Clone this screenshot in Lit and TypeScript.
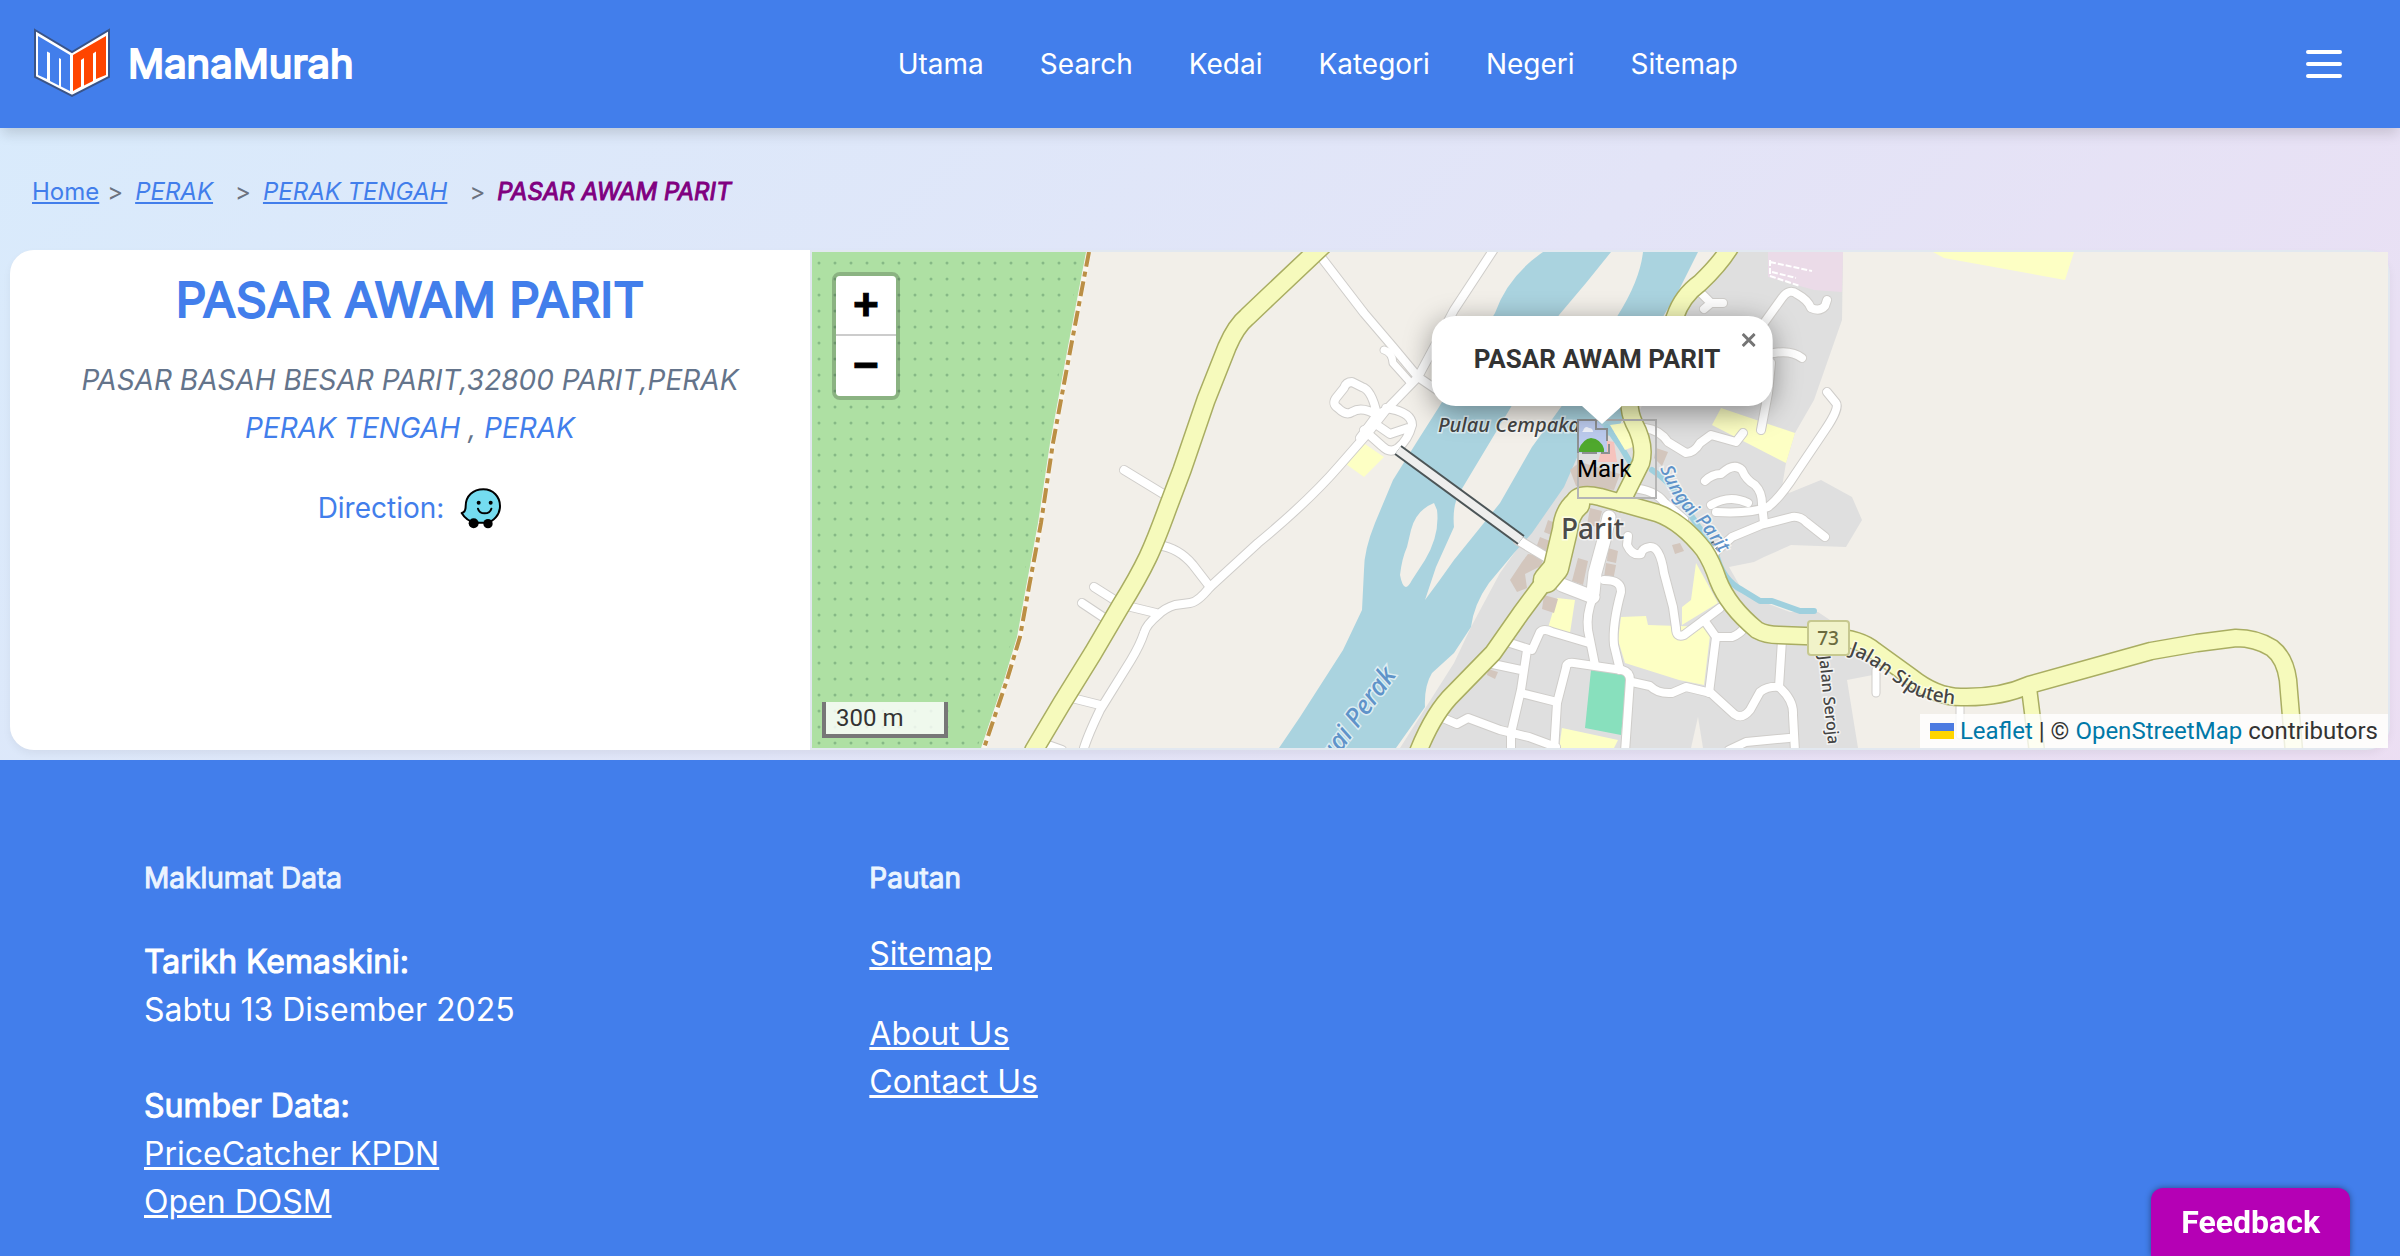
import { LitElement, html, css, svg } from "lit";
import { customElement, state } from "lit/decorators.js";

type Road = { d: string; w: number };

/* Minor streets, drawn first as a grey casing and then as a white core. */
const STREETS: Road[] = [
  { d: "M1124 470L1165 495", w: 8 },
  { d: "M1158 545Q1179 548 1193 565L1210 587", w: 8 },
  { d: "M1094 587L1113 599M1082 603L1103 617M1127 606L1156 613", w: 8 },
  { d: "M1072 698L1100 705M1048 745L1062 750", w: 8 },
  { d: "M1418 377L1386 410L1368 433L1340 465Q1310 500 1258 543L1210 587Q1198 602 1190 603L1175 605Q1165 608 1158 615Q1146 625 1144 633Q1140 645 1131 660L1100 710Q1088 735 1084 748", w: 8 },
  { d: "M1321 257L1364 313L1393 347L1418 377L1440 392M1418 377L1454 310L1496 246", w: 8 },
  { d: "M1384 350Q1392 352 1393 363L1410 382", w: 7 },
  { d: "M1386 410L1377 415Q1372 390 1362 387L1352 382Q1346 382 1344 388L1336 398Q1332 404 1338 408Q1346 416 1352 412Q1362 406 1377 415L1360 438M1386 408Q1412 412 1412 425Q1408 440 1398 448Q1390 454 1382 446L1364 430M1377 425L1390 434L1408 428", w: 8 },
  { d: "M1518 540L1546 557", w: 9 },
  { d: "M1701 293L1711 303L1723 303M1711 303L1704 309", w: 8 },
  { d: "M1764 323L1782 298Q1789 288 1797 294Q1808 300 1811 308Q1820 312 1825 306L1827 300", w: 8 },
  { d: "M1774 353Q1792 350 1802 358M1771 363L1768 393L1761 430", w: 8 },
  { d: "M1645 428Q1660 430 1668 442L1686 453Q1694 453 1700 443L1711 435L1736 442L1743 433", w: 8 },
  { d: "M1827 392L1836 403Q1840 408 1825 430L1796 473Q1780 498 1768 507Q1750 514 1716 512", w: 8 },
  { d: "M1705 481Q1712 474 1721 474Q1734 462 1742 470Q1746 480 1755 485Q1762 492 1762 504L1764 523M1711 505Q1730 494 1748 503", w: 8 },
  { d: "M1711 556L1732 537L1761 525L1792 517Q1800 516 1806 522L1825 537", w: 8 },
  { d: "M1632 488Q1655 490 1664 502L1684 519", w: 8 },
  { d: "M1609 517L1604 540L1595 573L1593 593", w: 13 },
  { d: "M1562 585L1593 597", w: 13 },
  { d: "M1593 597Q1586 615 1588 630L1595 665", w: 8 },
  { d: "M1604 580Q1622 580 1621 592Q1612 625 1614 645L1620 670", w: 8 },
  { d: "M1507 642L1532 650L1540 632Q1544 628 1552 632L1589 643", w: 8 },
  { d: "M1488 663L1521 670M1527 650L1521 690L1511 733V752M1521 693L1557 702", w: 8 },
  { d: "M1554 752L1557 703L1566 668Q1566 662 1574 663L1622 670Q1630 672 1630 680L1625 752", w: 8 },
  { d: "M1443 718L1457 724L1468 718L1500 730L1529 737L1556 747", w: 8 },
  { d: "M1632 682L1650 686Q1658 694 1672 693L1686 687L1711 693L1734 714Q1742 720 1750 710L1760 692Q1768 686 1779 687L1782 640", w: 8 },
  { d: "M1779 687Q1794 700 1793 715L1795 752", w: 8 },
  { d: "M1709 693L1716 637L1704 620M1716 637H1732Q1740 634 1744 628", w: 8 },
  { d: "M1720 608L1684 635Q1676 638 1676 628L1673 607L1664 573Q1660 546 1650 547Q1642 548 1641 554Q1632 556 1627 545L1628 536", w: 8 },
  { d: "M1729 750L1746 742L1789 738", w: 8 },
  { d: "M1876 670V693M1960 707V735", w: 7 },
];

/* Secondary roads, olive casing with a pale yellow core. */
const ROADS: Road[] = [
  { d: "M1322 246L1268 297L1247 317Q1236 326 1227 347L1206 400L1182 470L1168 507Q1156 540 1148 557Q1138 578 1120 607L1093 653L1062 703L1034 750", w: 17 },
  { d: "M1732 244Q1722 262 1700 283Q1682 296 1675 317L1650 380M1630 395Q1628 410 1634 423Q1646 445 1641 463L1621 503", w: 16 },
  { d: "M1577 504Q1567 512 1565 530L1556 568L1546 580", w: 24 },
  { d: "M1574 502Q1578 492 1600 497L1657 513Q1682 522 1704 550Q1712 562 1718 580Q1728 606 1757 630Q1766 635 1779 635L1830 637Q1860 638 1875 651L1911 677Q1936 697 1961 697Q2000 698 2029 685L2090 668L2151 651L2197 643L2236 638Q2256 638 2272 648Q2285 658 2288 680L2294 752", w: 16 },
  { d: "M1550 574L1521 613L1493 653L1454 693Q1434 712 1418 752", w: 16 },
  { d: "M2029 688L2037 752", w: 14 },
];

const BUILDINGS =
  "M1522 562l6-8 16 2-3 10-16 8 2 14-10 4-7-12z M1544 595l14 4-4 14-12-4z M1540 537l10 4-5 12-9-5z M1548 520l12 5-4 12-12-5z M1578 558l10 3-5 24-11-4z M1606 563l10 2-3 16-9-3z M1608 548l10 3-2 12-9-2z M1590 508l12 3-4 16-11-2z M1672 545l8-2 4 8-9 3z M1656 448l12 4-6 14-8-8z M1570 470l10-8 40 12-6 16-38-4z M1488 669l10 3-3 7-8-4z";

@customElement("store-map")
export class StoreMap extends LitElement {
  static styles = css`
    :host {
      display: block;
      position: relative;
      overflow: hidden;
      height: 496px;
      background: #f2efe9;
      font-family: Roboto, "Liberation Sans", sans-serif;
      font-size: 24px;
      color: #333;
    }
    .tiles {
      display: block;
      width: 100%;
      height: 100%;
    }
    .label {
      font-family: "Noto Sans", sans-serif;
      font-size: 19px;
      font-weight: 500;
      fill: #444;
      stroke: #ffffff99;
      stroke-width: 3px;
      paint-order: stroke;
    }
    .place { font-size: 28px; fill: #4a4a4a; }
    .island { font-style: italic; font-size: 20px; }
    .water { font-style: italic; fill: #5f93c9; }
    .small { font-size: 16px; }
    .large { font-size: 26px; }
    .shield { fill: #6b6b3f; stroke: none; }
    .zoom {
      position: absolute;
      top: 20px;
      left: 20px;
      display: flex;
      flex-direction: column;
      border: 4px solid #0003;
      border-radius: 8px;
      background-clip: padding-box;
    }
    .zoom button {
      width: 60px;
      height: 60px;
      padding: 4px 0 0;
      border: 0;
      background: #fff;
      color: #000;
      font: bold 44px/56px "Liberation Mono", monospace;
      -webkit-text-stroke: 1px #000;
    }
    .zoom button:first-child {
      border-bottom: 2px solid #ccc;
      border-radius: 4px 4px 0 0;
    }
    .zoom button:last-child { border-radius: 0 0 4px 4px; }
    .scale {
      position: absolute;
      left: 10px;
      bottom: 10px;
      box-sizing: border-box;
      width: 126px;
      padding: 0 10px;
      border: 4px solid #777;
      border-top: 0;
      background: #fffc;
      line-height: 32px;
    }
    .credit {
      position: absolute;
      right: 0;
      bottom: 0;
      display: flex;
      align-items: center;
      gap: 6px;
      padding: 0 10px;
      background: #fffc;
      line-height: 34px;
      white-space: nowrap;
    }
    .credit a { color: #0078a8; text-decoration: none; }
    .flag { width: 24px; height: 16px; }
    .marker {
      position: absolute;
      top: 167px;
      left: calc(50% - 23px);
      width: 80px;
      height: 80px;
      box-shadow: inset 0 0 0 2px #b5b5b5;
      color: #000;
      line-height: 28px;
    }
    .marker svg { display: block; width: 34px; height: 36px; }
    .marker span { display: block; }
    .popup {
      position: absolute;
      top: 64px;
      left: calc(50% + 2px);
      transform: translateX(-50%);
      box-sizing: border-box;
      height: 90px;
      padding: 26px 52px 0 42px;
      border-radius: 24px;
      background: #fff;
      box-shadow: 0 6px 28px #0006;
      font-size: 26px;
      font-weight: 700;
      line-height: 34px;
      white-space: nowrap;
    }
    .tip {
      position: absolute;
      top: 100%;
      left: 50%;
      width: 40px;
      height: 20px;
      margin-left: -20px;
      background: #fff;
      clip-path: polygon(0 0, 100% 0, 50% 90%);
    }
    .close {
      position: absolute;
      top: 0;
      right: 0;
      width: 48px;
      height: 48px;
      padding: 0;
      border: 0;
      background: none;
    }
    .close svg { display: block; width: 14px; height: 14px; margin: 0 auto; }
  `;

  @state() private open = true;

  private tiles() {
    return svg`<svg class="tiles" viewBox="812 252 1576 496" preserveAspectRatio="xMidYMid slice" role="img" aria-label="Map of Parit">
      <defs>
        <pattern id="dots" x="811" y="255" width="16" height="16" patternUnits="userSpaceOnUse">
          <circle cx="8" cy="8" r="1.5" fill="#86b986"/>
        </pattern>
        <path id="siputeh" d="M1849 654Q1862 658 1880 671L1911 693Q1936 706 1985 705"/>
        <path id="parit" d="M1660 468Q1672 500 1690 516T1735 578"/>
      </defs>
      <rect x="812" y="252" width="1576" height="496" fill="#f2efe9"/>
      <path d="M812 252H1086L1066 357L1050 443L1038 523L1026 587L1017 637L1004 680L981 748H812Z" fill="#aee0a3"/>
      <path d="M812 252H1082L1062 357L1046 443L1034 523L1022 587L1013 637L1000 680L977 748H812Z" fill="url(#dots)"/>
      <path d="M1089 252L1069 357L1053 443L1041 523L1029 587L1020 637L1007 680L984 748" fill="none" stroke="#fbf6ee" stroke-width="5"/>
      <path d="M1089 252L1069 357L1053 443L1041 523L1029 587L1020 637L1007 680L984 748" fill="none" stroke="#bb8f45" stroke-width="4" stroke-dasharray="15 5 5 5"/>

      <path d="M1734 252H1843L1842 320L1814 400L1795 433L1786 463L1782 487L1789 493L1821 480L1852 497L1862 520L1846 547L1791 545L1764 557L1754 562L1729 567L1745 595L1790 612H1818L1860 640L1883 660L1878 674L1847 680L1858 748H1400L1454 663L1471 627L1500 573L1545 510L1579 453L1640 410L1690 300Z" fill="#dfdfdf"/>
      <path d="M1698 717L1703 748H1691Z" fill="#f2efe9"/>
      <path d="M1768 252H1843L1842 292L1814 290L1768 277Z" fill="#ebdbe8"/>
      <path d="M1770 260V276L1800 286M1770 262L1812 271M1772 272L1796 278" fill="none" stroke="#fff" stroke-width="2" stroke-dasharray="6 2"/>

      <path d="M1543 252Q1508 276 1495 313L1439 407L1418 440L1393 480L1375 523Q1364 550 1364 570L1362 610L1343 650L1300 717L1279 748H1396L1425 707Q1424 686 1432 673L1454 653L1471 627Q1474 604 1489 583L1514 553L1532 533L1564 487L1579 453L1618 430L1664 315L1679 290L1698 252H1643Q1640 280 1618 315L1561 407L1532 447L1500 503L1454 560Q1440 580 1425 600L1436 567L1454 527Q1452 505 1460 492L1511 407L1559 315L1586 283L1611 252Z" fill="#aad3df"/>
      <path d="M1434 503Q1416 510 1411 530L1407 547Q1402 558 1400 575Q1404 596 1412 580L1425 560Q1440 535 1437 510Z" fill="#f2efe9"/>
      <path d="M1607 427L1621 447L1630 462M1652 470Q1668 480 1679 497L1696 523L1716 553Q1722 580 1742 590L1760 601H1772L1800 611H1814" fill="none" stroke="#9fd0de" stroke-width="6" stroke-linecap="round" stroke-linejoin="round"/>

      <g fill="#fdffc4">
        <path d="M1359 440L1384 457L1364 477L1343 462Z"/>
        <path d="M1721 408L1795 433L1786 463L1712 425Z"/>
        <path d="M1621 617L1646 616L1648 625L1711 627L1704 685L1679 680L1625 663L1618 640Z"/>
        <path d="M1696 563L1718 603L1682 625V607L1691 600Z"/>
        <path d="M1557 598L1575 600L1570 633L1548 628Z"/>
        <path d="M1562 728L1618 740L1614 748H1559Z"/>
        <path d="M1933 252H2074L2065 280L1944 258Z"/>
        <path d="M1610 425L1632 422L1638 445L1625 450Z"/>
      </g>
      <path d="M1591 670L1628 675L1621 735L1585 728Z" fill="#88e0bd"/>
      <path d=${BUILDINGS} fill="#d3c6bd"/>
      <path d="M1598 462L1604 440L1614 442L1617 462Z" fill="#f6c3bd"/>

      <g fill="none" stroke="#cfcdca" stroke-linecap="round" stroke-linejoin="round">
        ${STREETS.map((r) => svg`<path d=${r.d} stroke-width=${r.w + 2}/>`)}
      </g>
      <g fill="none" stroke="#fff" stroke-linecap="round" stroke-linejoin="round">
        ${STREETS.map((r) => svg`<path d=${r.d} stroke-width=${r.w}/>`)}
      </g>
      <path d="M1398 450L1521 540" fill="none" stroke="#4c5557" stroke-width="12"/>
      <path d="M1398 450L1521 540" fill="none" stroke="#eeeeed" stroke-width="8"/>
      <g fill="none" stroke="#a9ad62" stroke-linecap="round" stroke-linejoin="round">
        ${ROADS.map((r) => svg`<path d=${r.d} stroke-width=${r.w + 3}/>`)}
      </g>
      <g fill="none" stroke="#f6fabc" stroke-linecap="round" stroke-linejoin="round">
        ${ROADS.map((r) => svg`<path d=${r.d} stroke-width=${r.w}/>`)}
      </g>
      <path d="M1712 542L1720 552" stroke="#444" stroke-width="3" stroke-dasharray="4 3"/>

      <text class="label island" x="1438" y="432">Pulau Cempaka</text>
      <text class="label place" x="1561" y="539">Parit</text>
      <text class="label water large" transform="translate(1306 800) rotate(-54)">Sungai Perak</text>
      <text class="label water"><textPath href="#parit">Sungai Parit</textPath></text>
      <text class="label"><textPath href="#siputeh">Jalan Siputeh</textPath></text>
      <text class="label small" transform="translate(1819 656) rotate(84)">Jalan Seroja</text>
      <rect x="1808" y="621" width="41" height="34" rx="3" fill="#f1f3c9" stroke="#c6c88f" stroke-width="2"/>
      <text class="label shield" x="1828" y="645" text-anchor="middle">73</text>
    </svg>`;
  }

  render() {
    return html`
      ${this.tiles()}
      <div class="marker">
        <svg viewBox="0 0 34 36" aria-hidden="true">
          <path d="M2 2H20L30 12V34H2Z" fill="#bccbee"/>
          <path d="M6 12Q8 6 12 9Q16 9 16 13H5Z" fill="#f1f4fc"/>
          <path d="M2 30Q6 20 14 19Q24 20 27 30V33H2Z" fill="#4fa82d"/>
          <path d="M1 34V1H19M19 1V10H30V22M5 34H20M24 34H32V25" fill="none" stroke="#8d9092" stroke-width="2"/>
        </svg>
        <span>Mark</span>
      </div>
      ${this.open
        ? html`<div class="popup">
            PASAR AWAM PARIT
            <span class="tip"></span>
            <button class="close" aria-label="Close popup" @click=${() => (this.open = false)}>
              <svg viewBox="0 0 14 14"><path d="M1 1L13 13M13 1L1 13" stroke="#757575" stroke-width="3" /></svg>
            </button>
          </div>`
        : null}
      <div class="zoom">
        <button aria-label="Zoom in">+</button>
        <button aria-label="Zoom out">−</button>
      </div>
      <div class="scale">300 m</div>
      <div class="credit">
        <svg class="flag" viewBox="0 0 24 16" aria-hidden="true">
          <path d="M0 0H24V8H0Z" fill="#4c7be1" /><path d="M0 8H24V16H0Z" fill="#ffd500" />
        </svg>
        <span><a href="#leaflet">Leaflet</a> | © <a href="#osm">OpenStreetMap</a> contributors</span>
      </div>
    `;
  }
}

@customElement("app-root")
export class AppRoot extends LitElement {
  static styles = css`
    :host {
      --brand: #427eeb;
      display: flex;
      flex-direction: column;
      min-height: 100vh;
      background: linear-gradient(135deg, #d8ebfc, #e3e4f7 50%, #efdcf1);
      font-family: Inter, "Liberation Sans", sans-serif;
      font-optical-sizing: none;
      font-size: 28px;
      line-height: 48px;
    }
    a { color: inherit; }
    h1, h2, p { margin: 0; }
    h1, h2, b, strong, .brand {
      font-weight: 400;
      -webkit-text-stroke: 1px currentColor;
    }
    .header {
      position: relative;
      display: flex;
      align-items: center;
      justify-content: space-between;
      height: 128px;
      padding: 0 34px 0 32px;
      background: var(--brand);
      color: #fff;
      box-shadow: 0 8px 12px -2px #0002;
    }
    .brand {
      display: flex;
      align-items: center;
      gap: 16px;
      font-size: 40px;
      text-decoration: none;
      -webkit-text-stroke-width: 2px;
    }
    .brand svg { width: 80px; height: 72px; }
    .nav { display: flex; gap: 56px; }
    .nav a { text-decoration: none; }
    .menu {
      padding: 24px;
      border: 0;
      background: none;
      color: #fff;
    }
    .menu svg { display: block; width: 36px; height: 28px; }
    .crumbs {
      display: flex;
      gap: 8px;
      padding: 46px 32px 40px;
      color: #6b7280;
      font-size: 24px;
      line-height: 36px;
    }
    .crumbs a { color: var(--brand); }
    .crumbs .step { display: flex; gap: 12px; font-style: italic; }
    .crumbs .step + .step { margin-left: 14px; }
    .crumbs .mark { font-style: normal; }
    .crumbs strong { color: purple; }
    .card {
      display: grid;
      grid-template-columns: minmax(0, 800fr) minmax(0, 1580fr);
      margin: 0 10px 10px;
      border-radius: 24px;
      background: #e2e8f0;
      box-shadow: 0 4px 8px #0000000d;
    }
    .info {
      padding: 18px 20px;
      border-radius: 24px 0 0 24px;
      background: #fff;
      color: var(--brand);
      text-align: center;
    }
    .info a { text-decoration: none; }
    .info h1 {
      font-size: 48px;
      line-height: 64px;
      -webkit-text-stroke-width: 2px;
    }
    .address {
      margin-top: 24px;
      color: #64748b;
      font-style: italic;
    }
    .address a { color: var(--brand); }
    .direction {
      display: flex;
      align-items: center;
      justify-content: center;
      gap: 16px;
      margin-top: 32px;
    }
    .direction svg { display: block; width: 42px; height: 42px; }
    store-map { margin: 2px; }
    .footer {
      flex: 1;
      display: grid;
      grid-template-columns: repeat(3, 1fr);
      gap: 64px;
      padding: 94px 144px 16px;
      background: var(--brand);
      color: #fff;
      font-size: 32px;
    }
    .footer h2 {
      color: #ebf4ff;
      font-size: 28px;
    }
    .footer .block { margin-top: 36px; }
    .footer .block + .block { margin-top: 48px; }
    .footer .links { margin-top: 28px; }
    .footer .links + .links { margin-top: 32px; }
    .footer b { display: block; }
    .feedback {
      position: fixed;
      right: 50px;
      bottom: 0;
      height: 68px;
      padding: 0 30px;
      border: 0;
      border-radius: 12px 12px 0 0;
      background: #b500b5;
      box-shadow: 0 0 6px #0006;
      color: #fff;
      font: 700 32px/68px Roboto, "Liberation Sans", sans-serif;
    }
  `;

  render() {
    return html`
      <header class="header">
        <a class="brand" href="#home">
          <svg viewBox="32 28 80 72" aria-hidden="true">
            <path d="M35 30L72 52L109 30V77L72 96L35 77Z" fill="#fff" stroke="#3a5488" stroke-width="2" />
            <path d="M38 36L70 55V91L61 86.500V59L59 58V85.500L50 81V53L47 51.500V79L38 75Z" fill="#427eeb" />
            <path d="M106 36L73 55V91L81 86.500V60L84 58V85.500L93 81V53.500L96 51.500V79L106 75Z" fill="#ff4500" />
          </svg>
          <span>ManaMurah</span>
        </a>
        <nav class="nav">
          ${["Utama", "Search", "Kedai", "Kategori", "Negeri", "Sitemap"].map(
            (t) => html`<a href="#${t.toLowerCase()}">${t}</a>`
          )}
        </nav>
        <button class="menu" aria-label="Menu">
          <svg viewBox="0 0 36 28">
            <path d="M2 2H34M2 14H34M2 26H34" stroke="currentColor" stroke-width="4" stroke-linecap="round" />
          </svg>
        </button>
      </header>

      <nav class="crumbs" aria-label="Breadcrumb">
        <a href="#home">Home</a>
        <span class="step"><span class="mark">&gt;</span><a href="#perak">PERAK</a></span>
        <span class="step"><span class="mark">&gt;</span><a href="#perak-tengah">PERAK TENGAH</a></span>
        <span class="step"><span class="mark">&gt;</span><strong>PASAR AWAM PARIT</strong></span>
      </nav>

      <main class="card">
        <section class="info">
          <h1>PASAR AWAM PARIT</h1>
          <div class="address">
            <p>PASAR BASAH BESAR PARIT,32800 PARIT,PERAK</p>
            <p><a href="#perak-tengah">PERAK TENGAH</a> , <a href="#perak">PERAK</a></p>
          </div>
          <div class="direction">
            <span>Direction:</span>
            <a href="#waze" aria-label="Open in Waze">
              <svg viewBox="64 50 126 126">
                <path d="M69 128Q81 126 81 108C81 76 104 57 134 57C164 57 184 80 184 107C184 134 164 155 142 157H112C96 155 80 147 69 128Z" fill="#74dcf0" stroke="#000" stroke-width="6" stroke-linejoin="round" />
                <path d="M118 115Q122 129 138 129Q154 129 158 115" fill="none" stroke="#000" stroke-width="6" stroke-linecap="round" />
                <circle cx="120" cy="97" r="6" /><circle cx="156" cy="97" r="6" />
                <circle cx="105" cy="159" r="15" /><circle cx="148" cy="160" r="14" />
              </svg>
            </a>
          </div>
        </section>
        <store-map></store-map>
      </main>

      <footer class="footer">
        <section>
          <h2>Maklumat Data</h2>
          <div class="block">
            <b>Tarikh Kemaskini:</b>
            <p>Sabtu 13 Disember 2025</p>
          </div>
          <div class="block">
            <b>Sumber Data:</b>
            <p><a href="#pricecatcher">PriceCatcher KPDN</a></p>
            <p><a href="#opendosm">Open DOSM</a></p>
          </div>
        </section>
        <section>
          <h2>Pautan</h2>
          <div class="links"><p><a href="#sitemap">Sitemap</a></p></div>
          <div class="links">
            <p><a href="#about">About Us</a></p>
            <p><a href="#contact">Contact Us</a></p>
          </div>
        </section>
      </footer>
      <button class="feedback">Feedback</button>
    `;
  }
}
